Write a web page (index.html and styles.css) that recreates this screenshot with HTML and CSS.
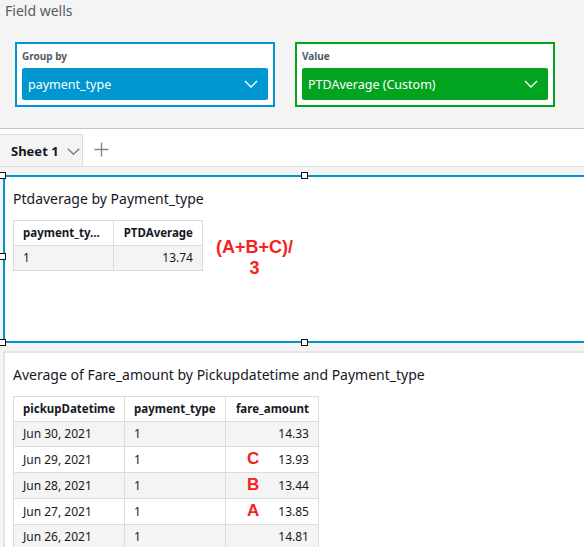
FILE: index.html
```html
<!DOCTYPE html>
<html>
<head>
<meta charset="utf-8">
<link rel="stylesheet" href="styles.css">
</head>
<body>
<div class="page">
  <section class="field-wells">
    <div class="fw-title">Field wells</div>
    <div class="wells">
      <div class="well well-blue">
        <div class="well-label">Group by</div>
        <div class="dropdown dd-blue">
          <span>payment_type</span>
          <svg class="chev" width="14" height="8" viewBox="0 0 14 8"><polyline points="1,1 7,7 13,1" fill="none" stroke="#fff" stroke-width="1.4"/></svg>
        </div>
      </div>
      <div class="well well-green">
        <div class="well-label">Value</div>
        <div class="dropdown dd-green">
          <span>PTDAverage (Custom)</span>
          <svg class="chev" width="14" height="8" viewBox="0 0 14 8"><polyline points="1,1 7,7 13,1" fill="none" stroke="#fff" stroke-width="1.4"/></svg>
        </div>
      </div>
    </div>
  </section>

  <nav class="tabbar">
    <div class="tab">
      <span>Sheet 1</span>
      <svg width="13" height="7" viewBox="0 0 13 7"><polyline points="0.7,0.7 6.5,6.3 12.3,0.7" fill="none" stroke="#777" stroke-width="1.2"/></svg>
    </div>
    <svg class="plus" width="15" height="15" viewBox="0 0 15 15"><path d="M7.5 0.5v14M0.5 7.5h14" stroke="#888" stroke-width="1.4" fill="none"/></svg>
  </nav>

  <div class="sheet">
    <div class="visual selected">
      <span class="handle h-tl"></span>
      <span class="handle h-tm"></span>
      <span class="handle h-ml"></span>
      <span class="handle h-bl"></span>
      <span class="handle h-bm"></span>
      <div class="v-title">Ptdaverage by Payment_type</div>
      <div class="v1-body">
        <table class="grid t1">
          <colgroup><col class="c100"><col class="c88"></colgroup>
          <thead><tr><th>payment_ty...</th><th class="num">PTDAverage</th></tr></thead>
          <tbody><tr class="odd"><td>1</td><td class="num">13.74</td></tr></tbody>
        </table>
        <div class="formula">(A+B+C)/<br>3</div>
      </div>
    </div>

    <div class="visual plain">
      <div class="v-title">Average of Fare_amount by Pickupdatetime and Payment_type</div>
      <table class="grid t2">
        <colgroup><col class="c111"><col class="c101"><col class="c92"></colgroup>
        <thead><tr><th>pickupDatetime</th><th>payment_type</th><th class="num">fare_amount</th></tr></thead>
        <tbody>
          <tr class="odd"><td>Jun 30, 2021</td><td>1</td><td class="num">14.33</td></tr>
          <tr><td>Jun 29, 2021</td><td>1</td><td class="num"><span class="mark">C</span>13.93</td></tr>
          <tr class="odd"><td>Jun 28, 2021</td><td>1</td><td class="num"><span class="mark">B</span>13.44</td></tr>
          <tr><td>Jun 27, 2021</td><td>1</td><td class="num"><span class="mark">A</span>13.85</td></tr>
          <tr class="odd"><td>Jun 26, 2021</td><td>1</td><td class="num">14.81</td></tr>
          <tr><td></td><td></td><td></td></tr>
        </tbody>
      </table>
    </div>
  </div>
</div>
</body>
</html>
```

FILE: styles.css
```css
html, body {
  margin: 0;
  padding: 0;
}
body {
  width: 584px;
  height: 547px;
  overflow: hidden;
  background: #f4f4f4;
  font-family: "Noto Sans", "Open Sans", sans-serif;
  color: #16191f;
}
.page {
  width: 584px;
  height: 547px;
  overflow: hidden;
}

/* Field wells */
.field-wells {
  height: 129px;
  box-sizing: border-box;
  border-bottom: 1px solid #c6c6c6;
  padding: 1px 0 0 5px;
}
.fw-title {
  font-size: 14px;
  line-height: 20px;
  color: #545b64;
}
.wells {
  display: flex;
  gap: 20px;
  margin: 21px 0 0 10px;
}
.well {
  width: 260px;
  height: 65px;
  box-sizing: border-box;
  background: #fff;
  padding: 5px 5px 0 5px;
}
.well-blue { border: 2px solid #0096d0; }
.well-green { border: 2px solid #02a31f; }
.well-label {
  font-size: 10px;
  font-weight: 700;
  line-height: 14px;
  color: #545b64;
  margin-bottom: 5px;
}
.dropdown {
  height: 32px;
  border-radius: 2px;
  display: flex;
  align-items: center;
  justify-content: space-between;
  padding: 0 10px 0 6px;
  color: #fff;
  font-size: 12.5px;
}
.dd-blue { background: #0096d0; }
.dd-green { background: #02a31f; }
.chev { display: block; }

/* Tab bar */
.tabbar {
  height: 38px;
  box-sizing: border-box;
  background: #fff;
  border-bottom: 1px solid #dcdcdc;
  display: flex;
  align-items: flex-end;
  padding-top: 5px;
}
.tab {
  width: 83px;
  height: 32px;
  box-sizing: border-box;
  background: #f4f4f4;
  border: 1px solid #dcdcdc;
  border-left: none;
  border-bottom: none;
  display: flex;
  align-items: center;
  gap: 8px;
  padding-left: 11px;
  font-size: 13px;
  font-weight: 700;
  color: #16191f;
}
.tab svg { display: block; margin-top: 1px; }
.plus {
  display: block;
  margin: 0 0 9px 11px;
}

/* Sheet */
.sheet {
  padding: 8px 0 0 3px;
  display: flex;
  flex-direction: column;
  gap: 8px;
}
.visual {
  position: relative;
  width: 610px;
  box-sizing: border-box;
  background: #fff;
  padding: 0 0 0 8px;
}
.visual.selected {
  height: 168px;
  border: 2px solid #0096d0;
}
.visual.plain {
  height: 220px;
  border: 2px solid #e3e3e3;
}
.handle {
  position: absolute;
  width: 5px;
  height: 5px;
  background: #fff;
  border: 1.5px solid #111;
}
.h-tl { left: -6px; top: -5px; }
.h-tm { left: 296px; top: -5px; }
.h-ml { left: -6px; top: 76px; }
.h-bl { left: -6px; bottom: -5px; }
.h-bm { left: 296px; bottom: -5px; }

.v-title {
  font-size: 14px;
  line-height: 20px;
  color: #16191f;
  padding-top: 12px;
  margin-bottom: 11px;
}

.v1-body {
  display: flex;
  align-items: flex-start;
  gap: 13px;
}
.formula {
  font-family: "Liberation Sans", Arial, sans-serif;
  font-weight: 700;
  font-size: 18px;
  line-height: 21px;
  color: #f62222;
  text-align: center;
  margin-top: 17px;
}

/* Tables */
.grid {
  border-collapse: collapse;
  table-layout: fixed;
  font-size: 12px;
}
.t1 { width: 189px; }
.t2 { width: 305px; }
.c100 { width: 100px; }
.c88 { width: 89px; }
.c111 { width: 111px; }
.c101 { width: 101px; }
.c92 { width: 93px; }
.grid th, .grid td {
  border: 1px solid #dcdcdc;
  height: 24px;
  line-height: 24px;
  padding: 0 9px 0 9px;
  text-align: left;
  white-space: nowrap;
  overflow: hidden;
}
.grid th {
  font-size: 11.5px;
  font-weight: 700;
  color: #16191f;
  background: #fff;
}
.grid td {
  color: #16191f;
  background: #fff;
}
.grid tr.odd td { background: #f4f4f4; }
.grid .num { text-align: right; }
.mark {
  font-family: "Liberation Sans", Arial, sans-serif;
  font-weight: 700;
  font-size: 17px;
  color: #f62222;
  margin-right: 19px;
}
```
